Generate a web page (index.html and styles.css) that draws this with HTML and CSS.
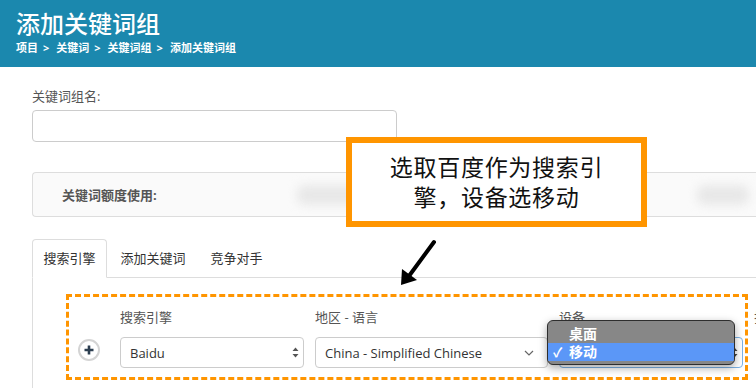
FILE: index.html
```html
<!DOCTYPE html>
<html lang="zh-CN">
<head>
  <meta charset="UTF-8" />
  <title>添加关键词组</title>
  <link rel="stylesheet" href="styles.css">
</head>
<body>

<header class="page-head">
  <h1>添加关键词组</h1>
  <div class="crumbs">项目<i>&gt;</i>关键词<i>&gt;</i>关键词组<i>&gt;</i>添加关键词组</div>
</header>

<main class="page">
  <label class="field-label">关键词组名:</label>
  <div class="text-input"></div>

  <!-- quota panel, numbers blurred out -->
  <div class="quota">
    <span class="quota-label">关键词额度使用:</span>
    <span class="blur blur-1"></span>
    <span class="blur blur-2"></span>
  </div>

  <ul class="tabs">
    <li class="active">搜索引擎</li>
    <li>添加关键词</li>
    <li>竞争对手</li>
  </ul>

  <div class="tab-pane">
    <div class="engine-row">
      <div class="add-col">
        <span class="add-btn">
          <svg width="10" height="10" viewBox="0 0 10 10"><path d="M5 0.5v9M0.5 5h9" stroke="#2c3e50" stroke-width="2.6"/></svg>
        </span>
      </div>

      <div class="field field-engine">
        <div class="label">搜索引擎</div>
        <div class="select">
          <span>Baidu</span>
          <svg width="7" height="11" viewBox="0 0 7 11"><path d="M3.5 0.5L6.5 4H0.5Z M3.5 10.5L6.5 7H0.5Z" fill="#555"/></svg>
        </div>
      </div>

      <div class="field field-region">
        <div class="label">地区 - 语言</div>
        <div class="select">
          <span>China - Simplified Chinese</span>
          <svg width="10" height="6" viewBox="0 0 10 6"><path d="M1 1l4 4 4-4" fill="none" stroke="#666" stroke-width="1.2"/></svg>
        </div>
      </div>

      <div class="field field-device">
        <div class="label">设备</div>
        <div class="select focused">
          <span></span>
          <svg width="7" height="11" viewBox="0 0 7 11"><path d="M3.5 0.5L6.5 4H0.5Z M3.5 10.5L6.5 7H0.5Z" fill="#444"/></svg>
        </div>
        <div class="menu">
          <div class="menu-item">桌面</div>
          <div class="menu-item picked"><span class="tick">✓</span>移动</div>
        </div>
      </div>

      <div class="field field-more">
        <div class="label">排</div>
      </div>
    </div>
  </div>

  <!-- annotation -->
  <div class="callout">选取百度作为搜索引<br>擎，设备选移动</div>
  <svg class="pointer" width="60" height="60" viewBox="0 0 60 60">
    <path d="M54 8L29 42" stroke="#000" stroke-width="4" stroke-linecap="round"/>
    <path d="M21 51L22 35L37 46Z" fill="#000"/>
  </svg>
</main>

</body>
</html>
```

FILE: styles.css
```css
* {
  margin: 0;
  padding: 0;
  box-sizing: border-box;
}

body {
  font-family: 'Open Sans', 'Noto Sans CJK SC', sans-serif;
  background: #fff;
  color: #333;
  height: 388px;
  overflow: hidden;
}

.page-head {
  background: #1b88ae;
  height: 67px;
  padding: 8px 16px 0;
  color: #fff;
}

.page-head h1 {
  font-size: 24px;
  font-weight: 500;
  line-height: 32px;
}

.crumbs {
  font-size: 11px;
  font-weight: bold;
  line-height: 16px;
}

.crumbs i {
  font-style: normal;
  margin: 0 7px 0 5px;
}

.page {
  position: relative;
  padding: 20px 0 0 32px;
  overflow: hidden;
}

.field-label {
  display: block;
  font-size: 13px;
  line-height: 18px;
  color: #555;
  margin-bottom: 5px;
}

.text-input {
  width: 365px;
  height: 32px;
  border: 1px solid #ccc;
  border-radius: 4px;
}

.quota {
  margin-top: 30px;
  height: 45px;
  background: #fafafa;
  border: 1px solid #ddd;
  border-right: none;
  border-radius: 4px 0 0 4px;
  display: flex;
  align-items: center;
  padding-left: 29px;
}

.quota-label {
  font-size: 13px;
  font-weight: bold;
  color: #555;
}

.blur {
  height: 20px;
  background: #e8e8e8;
  border-radius: 8px;
  filter: blur(5px);
}

.blur-1 {
  width: 70px;
  margin-left: 140px;
}

.blur-2 {
  width: 52px;
  margin-left: 330px;
}

.tabs {
  list-style: none;
  display: flex;
  margin-top: 22px;
  height: 39px;
  border-bottom: 1px solid #ddd;
}

.tabs li {
  height: 39px;
  padding: 0 10.5px;
  margin-right: 2px;
  font-size: 13px;
  line-height: 37px;
  color: #333;
  border: 1px solid transparent;
  border-radius: 4px 4px 0 0;
}

.tabs li.active {
  background: #fff;
  border-color: #ddd #ddd #fff;
}

.tab-pane {
  border-left: 1px solid #ddd;
  height: 120px;
  padding: 16px 0 0 33px;
  overflow: hidden;
}

.engine-row {
  width: 682px;
  height: 86px;
  border: 3px dashed #ff9500;
  display: flex;
  gap: 11px;
  padding: 10px 0 0 9px;
}

.add-col {
  flex-shrink: 0;
  width: 31px;
  padding-top: 32px;
}

.add-btn {
  width: 22px;
  height: 22px;
  border: 2px solid #d4d4d4;
  border-radius: 50%;
  display: flex;
  align-items: center;
  justify-content: center;
}

.field {
  position: relative;
  flex-shrink: 0;
}

.field-engine { width: 184px; }
.field-region { width: 233px; }
.field-device { width: 184px; }
.field-more { width: 40px; }

.label {
  font-size: 13px;
  line-height: 20px;
  color: #555;
  margin-bottom: 10px;
}

.select {
  height: 31px;
  border: 1px solid #ccc;
  border-radius: 4px;
  display: flex;
  align-items: center;
  justify-content: space-between;
  padding: 0 4px 0 9px;
  font-size: 13px;
  color: #333;
}

.field-region .select {
  padding-right: 13px;
}

.select.focused {
  border-color: #7cb2e6;
}

.menu {
  position: absolute;
  left: -12px;
  top: 13px;
  width: 188px;
  height: 45px;
  background: #878787;
  border: 1px solid #2e2e2e;
  border-radius: 6px;
  padding-top: 3px;
  box-shadow: 0 3px 8px rgba(0, 0, 0, 0.35);
  overflow: hidden;
}

.menu-item {
  height: 19px;
  line-height: 19px;
  padding-left: 21px;
  font-size: 14px;
  font-weight: bold;
  color: #fff;
}

.menu-item.picked {
  background: #5b97f7;
  height: 18px;
  line-height: 18px;
  position: relative;
}

.tick {
  position: absolute;
  left: 5px;
  font-size: 13px;
}

.callout {
  position: absolute;
  left: 346px;
  top: 70px;
  width: 301px;
  height: 90px;
  border: 6px solid #ff9500;
  background: #fff;
  padding-top: 9px;
  font-size: 23px;
  line-height: 30px;
  letter-spacing: 0.7px;
  text-align: center;
  color: #111;
}

.pointer {
  position: absolute;
  left: 380px;
  top: 167px;
}
```
